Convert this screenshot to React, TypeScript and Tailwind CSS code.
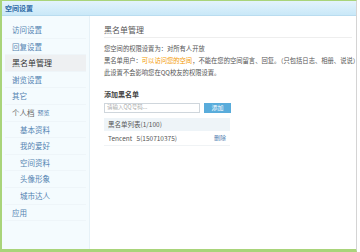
import React from 'react'

const FONT = { fontFamily: '"Noto Sans CJK SC", "Liberation Sans", sans-serif' }

type NavItem = { label: string; sub?: boolean; active?: boolean; plain?: boolean; extra?: string }

const NAV: NavItem[] = [
  { label: '访问设置' },
  { label: '回复设置' },
  { label: '黑名单管理', active: true },
  { label: '谢览设置' },
  { label: '其它' },
  { label: '个人档', plain: true, extra: '预览' },
  { label: '基本资料', sub: true },
  { label: '我的爱好', sub: true },
  { label: '空间资料', sub: true },
  { label: '头像形象', sub: true },
  { label: '城市达人', sub: true },
  { label: '应用' },
]

export default function App() {
  return (
    <div className="w-[360px] h-[252px] bg-white overflow-hidden" style={FONT}>
      <div className="flex flex-col h-full w-[357px] border-l-2 border-b-[3px] border-t border-[#a9d47a] border-r border-r-[#d4d4d4]">
        {/* 标题栏 */}
        <div className="h-[15px] shrink-0 flex items-center px-[3px] bg-gradient-to-b from-[#e3f3fc] to-[#c9e8f8] border-b border-[#b9dcef]">
          <span className="text-[7px] leading-none font-bold text-[#2f6aa5]">空间设置</span>
        </div>

        <div className="flex flex-1 min-h-0">
          {/* 侧栏 */}
          <div className="w-[88px] shrink-0 bg-[#f4fbfe] border-r border-[#e6f1f7] pt-[6px] px-[3px]">
            {NAV.map((item) => (
              <div
                key={item.label}
                className={`h-[16.6px] flex items-center border-b border-[#eef5f9] ${item.sub ? 'pl-[15px]' : 'pl-[7px]'} ${item.active ? 'bg-[#eef0f2]' : ''}`}
              >
                <span
                  className={`leading-none ${item.active ? 'text-[8px] text-[#333]' : 'text-[7.5px]'} ${item.plain ? 'text-[#666]' : item.active ? '' : 'text-[#5584b2]'}`}
                >
                  {item.label}
                </span>
                {item.extra && (
                  <span className="ml-[3px] text-[6px] leading-none text-[#5584b2]">{item.extra}</span>
                )}
              </div>
            ))}
          </div>

          {/* 内容 */}
          <div className="flex-1 min-w-0 pl-[14px] pt-[6px] overflow-hidden">
            <div className="h-[16px] flex items-center border-b border-[#eeeeee] mr-[4px]">
              <span className="text-[8px] leading-none text-[#555]">黑名单管理</span>
            </div>
            <div className="mt-[7px] space-y-[5px] text-[6.3px] leading-[7px] text-[#555] whitespace-nowrap">
              <p>您空间的权限设置为：对所有人开放</p>
              <p>
                黑名单用户：<span className="text-[#f39800]">可以访问您的空间</span>，不能在您的空间留言、回复。（只包括日志、相册、说说）
              </p>
              <p>此设置不会影响您在QQ校友的权限设置。</p>
            </div>

            <p className="mt-[15px] text-[7px] leading-none font-bold text-[#444]">添加黑名单</p>
            <div className="mt-[5px] flex items-center gap-[4px]">
              <div className="w-[96px] h-[10px] border border-[#cfd6dc] bg-white flex items-center px-[2px]">
                <span className="text-[5.5px] leading-none text-[#aaa]">请输入QQ号码...</span>
              </div>
              <div className="w-[27px] h-[10px] bg-[#59acdb] flex items-center justify-center">
                <span className="text-[6px] leading-none text-white">添加</span>
              </div>
            </div>

            <div className="mt-[5px] w-[126px]">
              <div className="h-[13px] bg-[#eef4f8] flex items-center px-[4px]">
                <span className="text-[6.5px] leading-none text-[#555]">黑名单列表(1/100)</span>
              </div>
              <div className="h-[15px] flex items-center justify-between px-[4px] border-b border-[#f0f3f5]">
                <span className="text-[6.5px] leading-none text-[#555]">Tencent&nbsp;&nbsp;&nbsp;5(150710375)</span>
                <span className="text-[6px] leading-none text-[#5584b2]">删除</span>
              </div>
            </div>
          </div>
        </div>
      </div>
    </div>
  )
}
